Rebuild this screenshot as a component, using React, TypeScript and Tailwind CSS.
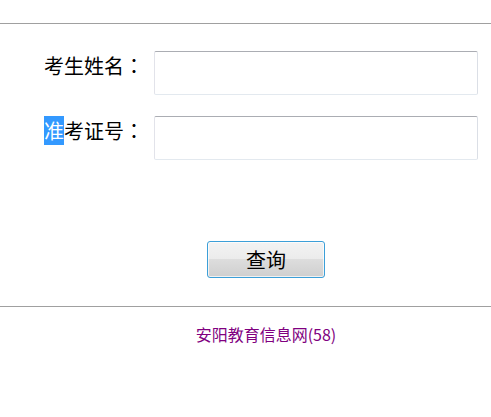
import React from 'react';

const fontStack = { fontFamily: '"Noto Sans CJK SC", "Liberation Sans", sans-serif' };

// fullwidth colon, centred in its cell like the reference
const Colon: React.FC = () => (
  <span className="font-['Noto_Sans_CJK_TC',sans-serif]">：</span>
);

const Field: React.FC<{ label: React.ReactNode }> = ({ label }) => (
  <div className="flex items-start">
    <div className="w-[144px] pt-px text-right text-[20px] leading-[28px] text-black [text-spacing-trim:space-all]">
      {label}
      <Colon />
    </div>
    <input
      type="text"
      className="ml-[10px] h-[44px] w-[324px] rounded-[2px] border border-[#e3e9ef] border-t-[#abadb3] border-l-[#e2e3ea] border-r-[#dbdfe6] bg-white outline-none"
    />
  </div>
);

const App: React.FC = () => {
  return (
    <div className="min-h-[417px] w-[491px] bg-white" style={fontStack}>
      {/* top rule */}
      <div className="pt-[23px]">
        <div className="h-px bg-[#a0a0a0]" />
      </div>

      {/* form */}
      <div className="mt-[27px] flex flex-col gap-[21px]">
        <Field label="考生姓名" />
        <Field
          label={
            <>
              <span className="bg-[#3399ff] text-white">准</span>考证号
            </>
          }
        />
      </div>

      <div className="mt-[81px] flex justify-center pl-[41px]">
        <button
          type="button"
          className="h-[37px] w-[118px] rounded-[3px] border border-[#3c9fd8] bg-[linear-gradient(to_bottom,#f3f3f3_0%,#ebebeb_50%,#dddddd_50%,#cfcfcf_100%)] text-[20px] leading-[28px] text-black shadow-[inset_0_0_0_1px_rgba(255,255,255,0.7)]"
        >
          查询
        </button>
      </div>

      {/* bottom rule */}
      <div className="mt-[28px] h-px bg-[#a0a0a0]" />

      <div className="mt-[17px] pl-[41px] text-center text-[16px] leading-[20px] text-[#800080]">
        安阳教育信息网(58)
      </div>
    </div>
  );
};

export default App;
